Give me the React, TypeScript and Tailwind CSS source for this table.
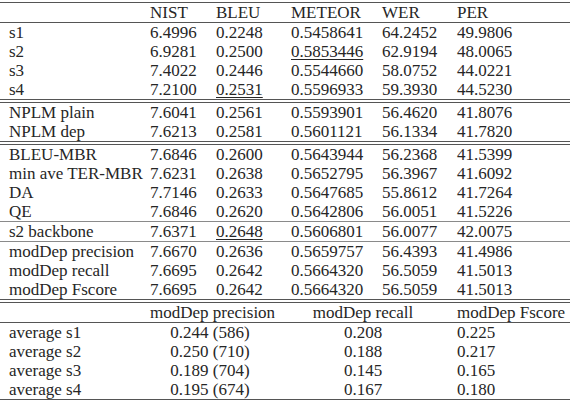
type Row = { label: string; cells: string[]; mark?: number };

const groups: Row[][] = [
  [
    { label: "s1", cells: ["6.4996", "0.2248", "0.5458641", "64.2452", "49.9806"] },
    { label: "s2", cells: ["6.9281", "0.2500", "0.5853446", "62.9194", "48.0065"], mark: 2 },
    { label: "s3", cells: ["7.4022", "0.2446", "0.5544660", "58.0752", "44.0221"] },
    { label: "s4", cells: ["7.2100", "0.2531", "0.5596933", "59.3930", "44.5230"], mark: 1 },
  ],
  [
    { label: "NPLM plain", cells: ["7.6041", "0.2561", "0.5593901", "56.4620", "41.8076"] },
    { label: "NPLM dep", cells: ["7.6213", "0.2581", "0.5601121", "56.1334", "41.7820"] },
  ],
  [
    { label: "BLEU-MBR", cells: ["7.6846", "0.2600", "0.5643944", "56.2368", "41.5399"] },
    { label: "min ave TER-MBR", cells: ["7.6231", "0.2638", "0.5652795", "56.3967", "41.6092"] },
    { label: "DA", cells: ["7.7146", "0.2633", "0.5647685", "55.8612", "41.7264"] },
    { label: "QE", cells: ["7.6846", "0.2620", "0.5642806", "56.0051", "41.5226"] },
  ],
  [{ label: "s2 backbone", cells: ["7.6371", "0.2648", "0.5606801", "56.0077", "42.0075"], mark: 1 }],
  [
    { label: "modDep precision", cells: ["7.6670", "0.2636", "0.5659757", "56.4393", "41.4986"] },
    { label: "modDep recall", cells: ["7.6695", "0.2642", "0.5664320", "56.5059", "41.5013"] },
    { label: "modDep Fscore", cells: ["7.6695", "0.2642", "0.5664320", "56.5059", "41.5013"] },
  ],
];

// how each group is closed off from the next one
const seps: ("double" | "gray")[] = ["double", "double", "gray", "gray", "double"];

const averages = [
  ["average s1", "0.244 (586)", "0.208", "0.225"],
  ["average s2", "0.250 (710)", "0.188", "0.217"],
  ["average s3", "0.189 (704)", "0.145", "0.165"],
  ["average s4", "0.195 (674)", "0.167", "0.180"],
];

const topCols = "grid grid-cols-[150px_66px_75px_91px_75px_1fr] h-[19px] leading-[19px]";
const botCols = "grid grid-cols-[150px_120px_186px_1fr] h-[19px] leading-[19px]";

function Rule({ gray }: { gray?: boolean }) {
  return <div className={gray ? "h-px bg-[#8a8a8a]" : "h-px bg-[#555]"} />;
}

function DoubleRule() {
  return <div className="h-[4px] border-y border-[#555]" />;
}

function MetricRow({ row }: { row: Row }) {
  return (
    <div className={topCols}>
      <div className="pl-[9px] whitespace-nowrap">{row.label}</div>
      {row.cells.map((c, i) => (
        <div key={i} className="whitespace-nowrap">
          <span className={row.mark === i ? "underline decoration-[1px] underline-offset-[2px]" : ""}>{c}</span>
        </div>
      ))}
    </div>
  );
}

export default function App() {
  return (
    <div className="w-[570px] h-[402px] bg-white pt-[2px] text-[17px] text-[#262626] [font-family:'Liberation_Serif','Times_New_Roman',serif]">
      <Rule />
      <div className={topCols}>
        <div />
        <div>NIST</div>
        <div>BLEU</div>
        <div>METEOR</div>
        <div>WER</div>
        <div>PER</div>
      </div>
      <Rule />
      {groups.map((g, gi) => (
        <div key={gi}>
          {g.map((r) => (
            <MetricRow key={r.label} row={r} />
          ))}
          {seps[gi] === "double" ? <DoubleRule /> : <Rule gray />}
        </div>
      ))}
      <div className={botCols}>
        <div />
        <div className="text-center whitespace-nowrap">modDep precision</div>
        <div className="text-center whitespace-nowrap">modDep recall</div>
        <div className="pl-px whitespace-nowrap">modDep Fscore</div>
      </div>
      <Rule />
      {averages.map((a) => (
        <div key={a[0]} className={botCols}>
          <div className="pl-[9px] whitespace-nowrap">{a[0]}</div>
          <div className="text-center whitespace-nowrap">{a[1]}</div>
          <div className="text-center">{a[2]}</div>
          <div className="pl-px">{a[3]}</div>
        </div>
      ))}
      <Rule />
    </div>
  );
}
